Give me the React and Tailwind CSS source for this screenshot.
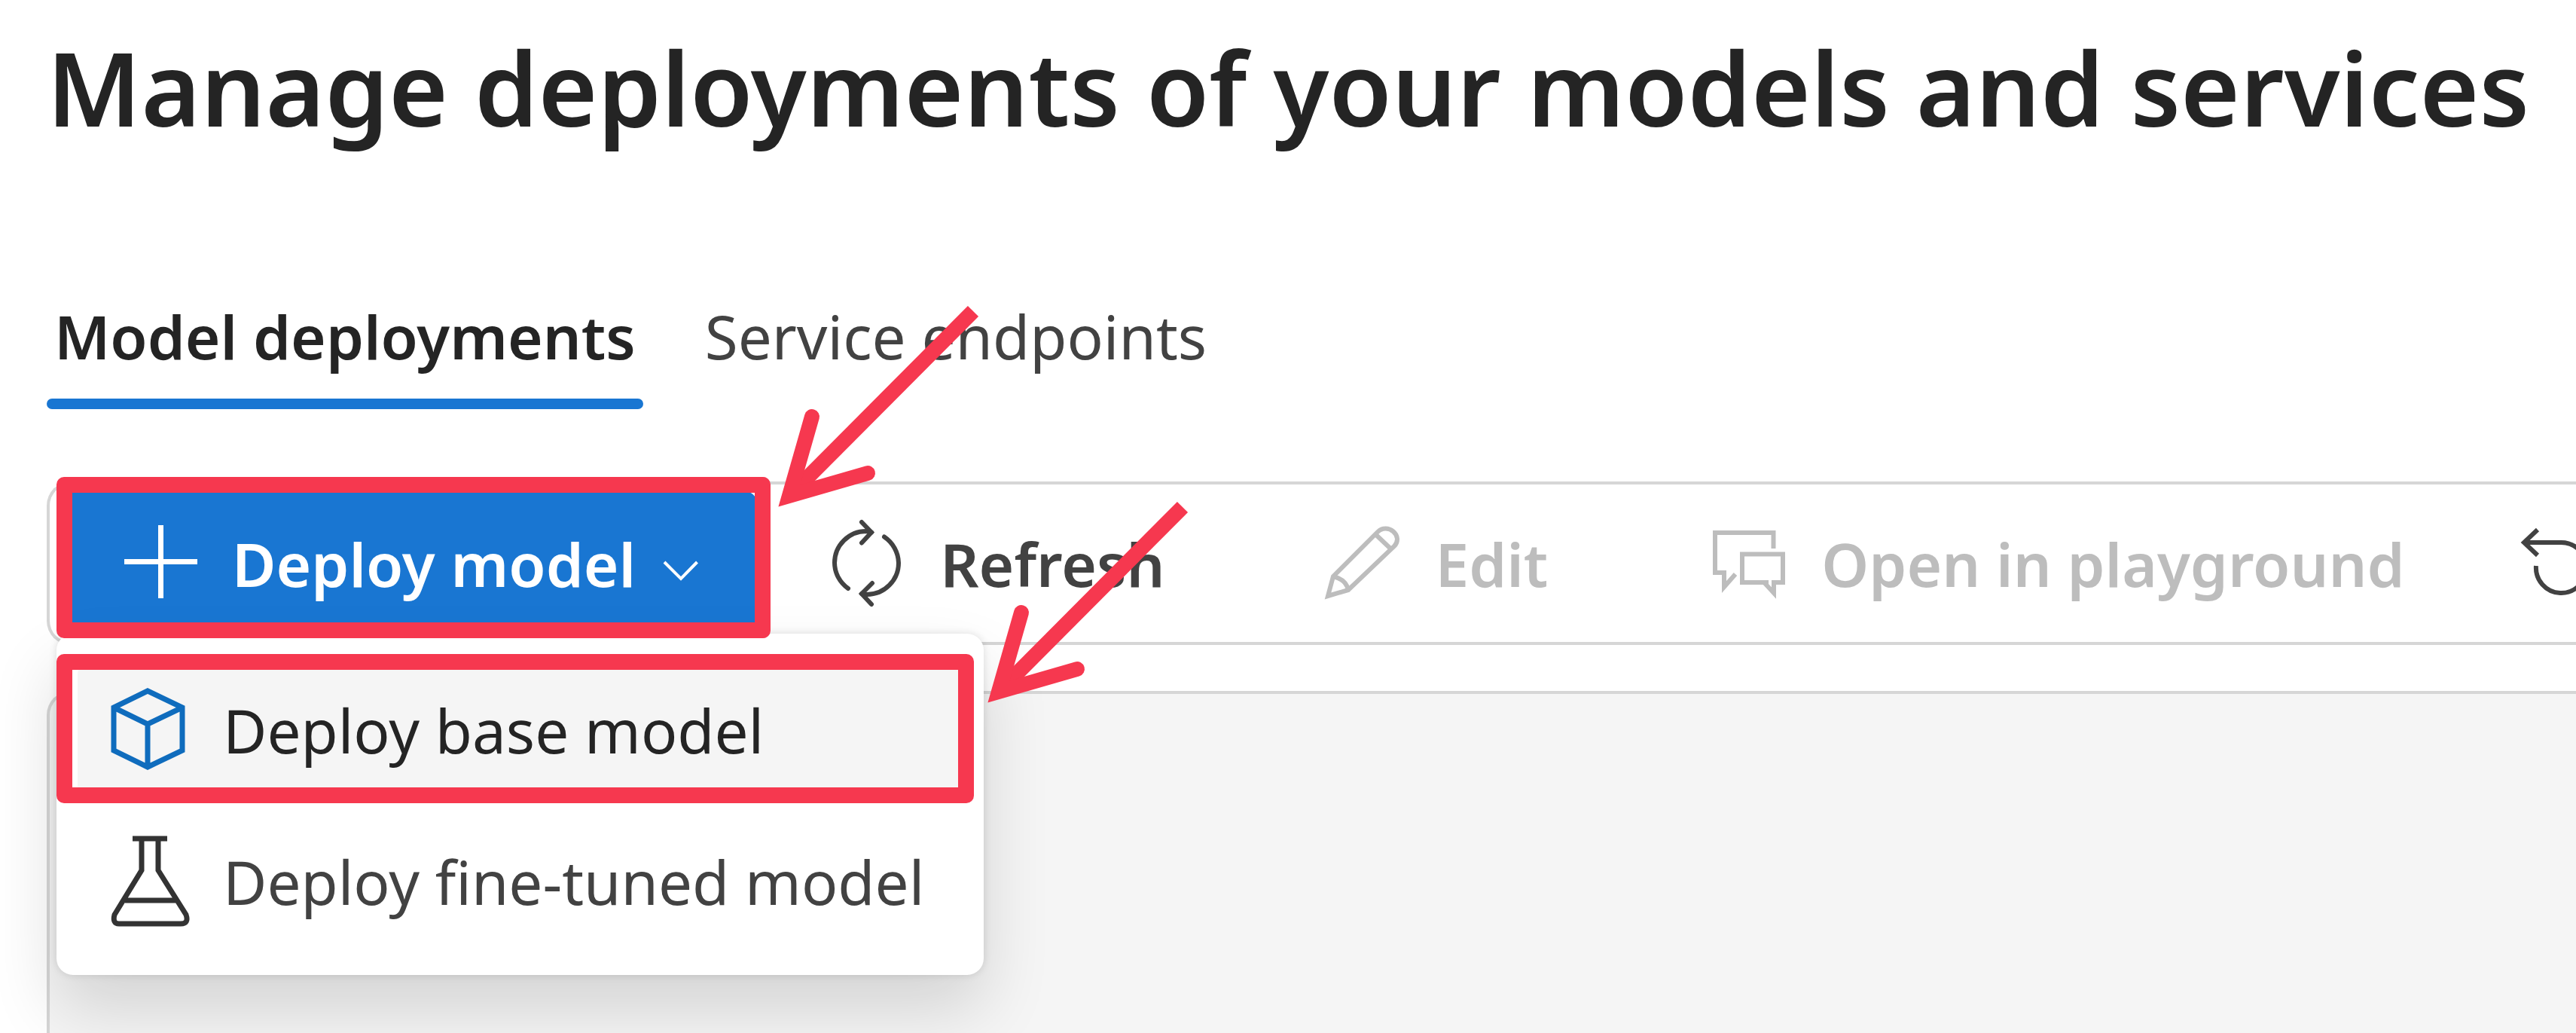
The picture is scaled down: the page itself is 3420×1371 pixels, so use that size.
function Icon({ viewBox, className = "", strokeWidth = 7, children }) {
  return (
    <svg
      viewBox={viewBox}
      className={`shrink-0 overflow-visible ${className}`}
      fill="none"
      stroke="currentColor"
      strokeWidth={strokeWidth}
      aria-hidden="true"
    >
      {children}
    </svg>
  );
}

function PlusIcon() {
  return (
    <Icon viewBox="0 0 97 102" className="h-[102px] w-[97px]" strokeWidth={7}>
      <path d="M0 48.5H97M48.5 0V97" />
    </Icon>
  );
}

function ChevronIcon() {
  return (
    <Icon viewBox="22 106 47 44" className="h-[44px] w-[47px]" strokeWidth={4}>
      <path d="M24 126L46 148L67.5 126" />
    </Icon>
  );
}

function RefreshIcon() {
  return (
    <Icon viewBox="46 28 97 120" className="h-[120px] w-[97px]" strokeWidth={6}>
      <path
        strokeLinecap="round"
        d="M69 121A42 42 0 0 1 51 87A42 42 0 0 1 93 45L100 46.5M117 52.5A43 43 0 0 1 136 87A42 42 0 0 1 94 129L87 128"
      />
      <path strokeLinecap="round" d="M87 33L100 46.5L87 60.5M101 114L87 128L100 142" />
    </Icon>
  );
}

function PencilIcon() {
  return (
    <Icon viewBox="40 33 97 110" className="h-[110px] w-[97px]" strokeWidth={6}>
      <path d="M42 131L49 105L108 46C121 33 143 51 130 65L69 123Z" />
      <path d="M105 49L125 68M49 105Q66 109 69 123" />
    </Icon>
  );
}

function ChatIcon() {
  return (
    <Icon viewBox="24 13 97 110" className="h-[110px] w-[97px]" strokeWidth={6}>
      <path d="M105.5 48V27H28V80H40V99L55 82" />
      <path d="M99 93H64V55.5H118V93H106V107L94 94" />
    </Icon>
  );
}

function UndoIcon() {
  return (
    <Icon viewBox="128 93 97 110" className="h-[110px] w-[97px]" strokeWidth={6}>
      <path d="M149 103L131 120L149 137M131 120H180A33.5 33.5 0 1 1 147 151" />
    </Icon>
  );
}

function CubeIcon() {
  return (
    <Icon viewBox="17 9 99 120" className="h-[120px] w-[99px] text-[#0f6cbd]">
      <path d="M66 17L112 39V96L66 118L21 96V39ZM21 39L66 61L112 39M66 61V118" />
    </Icon>
  );
}

function FlaskIcon() {
  return (
    <Icon viewBox="17 10 99 130" className="h-[130px] w-[99px] text-[#333333]">
      <path d="M46 18H92M58 18V60L22 119Q19 131 28 131H110Q121 131 117 119L80 60V18M36 100H104" />
    </Icon>
  );
}

function ToolbarButton({ icon, label, disabled, className }) {
  return (
    <button
      type="button"
      disabled={disabled}
      aria-label={label ? undefined : "Undo"}
      className={`flex shrink-0 items-center gap-[48px] font-semibold text-[#424242] disabled:text-[#bdbdbd] ${className}`}
    >
      {icon}
      {label}
    </button>
  );
}

function MenuItem({ icon, label, active }) {
  return (
    <button
      type="button"
      role="menuitem"
      className={`flex h-[180px] items-center gap-[50px] rounded-[16px] pl-[44px] ${
        active ? "bg-[#f5f5f5] text-[#242424]" : "text-[#424242]"
      }`}
    >
      {icon}
      {label}
    </button>
  );
}

function Arrow({ x, y }) {
  return (
    <g transform={`translate(${x} ${y})`}>
      <path d="M259 -260L15 -15" />
      <path strokeLinecap="round" strokeMiterlimit="10" d="M45 -120L15 -15L119 -45" />
    </g>
  );
}

export default function App() {
  return (
    <main className="relative flex min-h-screen flex-col overflow-hidden bg-white pl-[62px] font-['Noto_Sans',sans-serif] text-[80px] leading-[108px] whitespace-nowrap text-[#242424]">
      <h1 className="pt-[26px] text-[135px] leading-[180px] font-semibold">
        Manage deployments of your models and services
      </h1>

      <div role="tablist" className="mt-[186px] flex gap-[72px]">
        <button type="button" role="tab" aria-selected="true" className="flex flex-col font-semibold">
          <span className="px-[10px]">Model deployments</span>
          <span className="mt-[29px] h-[14px] w-full rounded-full bg-[#1976d2]" />
        </button>
        <button type="button" role="tab" aria-selected="false" className="self-start px-[10px] text-[#424242]">
          Service endpoints
        </button>
      </div>

      <div className="relative z-10 mt-[96px]">
        <div
          role="toolbar"
          aria-label="Deployment actions"
          className="flex h-[217px] items-center rounded-l-[32px] border-y-4 border-l-4 border-[#d6d6d6] pl-[20px]"
        >
          <button
            type="button"
            aria-haspopup="menu"
            aria-expanded="true"
            className="flex h-[192px] shrink-0 items-center rounded-[16px] bg-[#1976d2] pr-[78px] pl-[79px] font-semibold text-white"
          >
            <PlusIcon />
            <span className="mr-[36px] ml-[46px]">Deploy model</span>
            <ChevronIcon />
          </button>
          <ToolbarButton icon={<RefreshIcon />} label="Refresh" className="ml-[98px]" />
          <ToolbarButton icon={<PencilIcon />} label="Edit" disabled className="ml-[214px]" />
          <ToolbarButton icon={<ChatIcon />} label="Open in playground" disabled className="ml-[218px]" />
          <ToolbarButton icon={<UndoIcon />} className="ml-[155px]" />
        </div>

        <div
          role="menu"
          className="absolute top-[202px] left-[13px] flex w-[1231px] flex-col gap-[21px] rounded-[22px] bg-white px-[28px] pt-[38px] pb-[34px] shadow-[0_0_11px_rgba(0,0,0,0.12),0_45px_90px_rgba(0,0,0,0.14)]"
        >
          <MenuItem icon={<CubeIcon />} label="Deploy base model" active />
          <MenuItem icon={<FlaskIcon />} label="Deploy fine-tuned model" />
        </div>

        <div className="pointer-events-none absolute top-[-6px] left-[13px] h-[214px] w-[948px] rounded-[10px] border-[21px] border-[#f6384f]" />
        <div className="pointer-events-none absolute top-[229px] left-[13px] h-[198px] w-[1218px] rounded-[10px] border-[21px] border-[#f6384f]" />
      </div>

      <section
        aria-label="Deployments"
        className="mt-[61px] flex-1 rounded-tl-[32px] border-t-4 border-l-4 border-[#d6d6d6] bg-[#f5f5f5]"
      />

      <svg
        className="pointer-events-none absolute top-0 left-0 z-20 size-full"
        fill="none"
        stroke="#f6384f"
        strokeWidth="20"
        aria-hidden="true"
      >
        <Arrow x={1033} y={673} />
        <Arrow x={1311} y={933} />
      </svg>
    </main>
  );
}
